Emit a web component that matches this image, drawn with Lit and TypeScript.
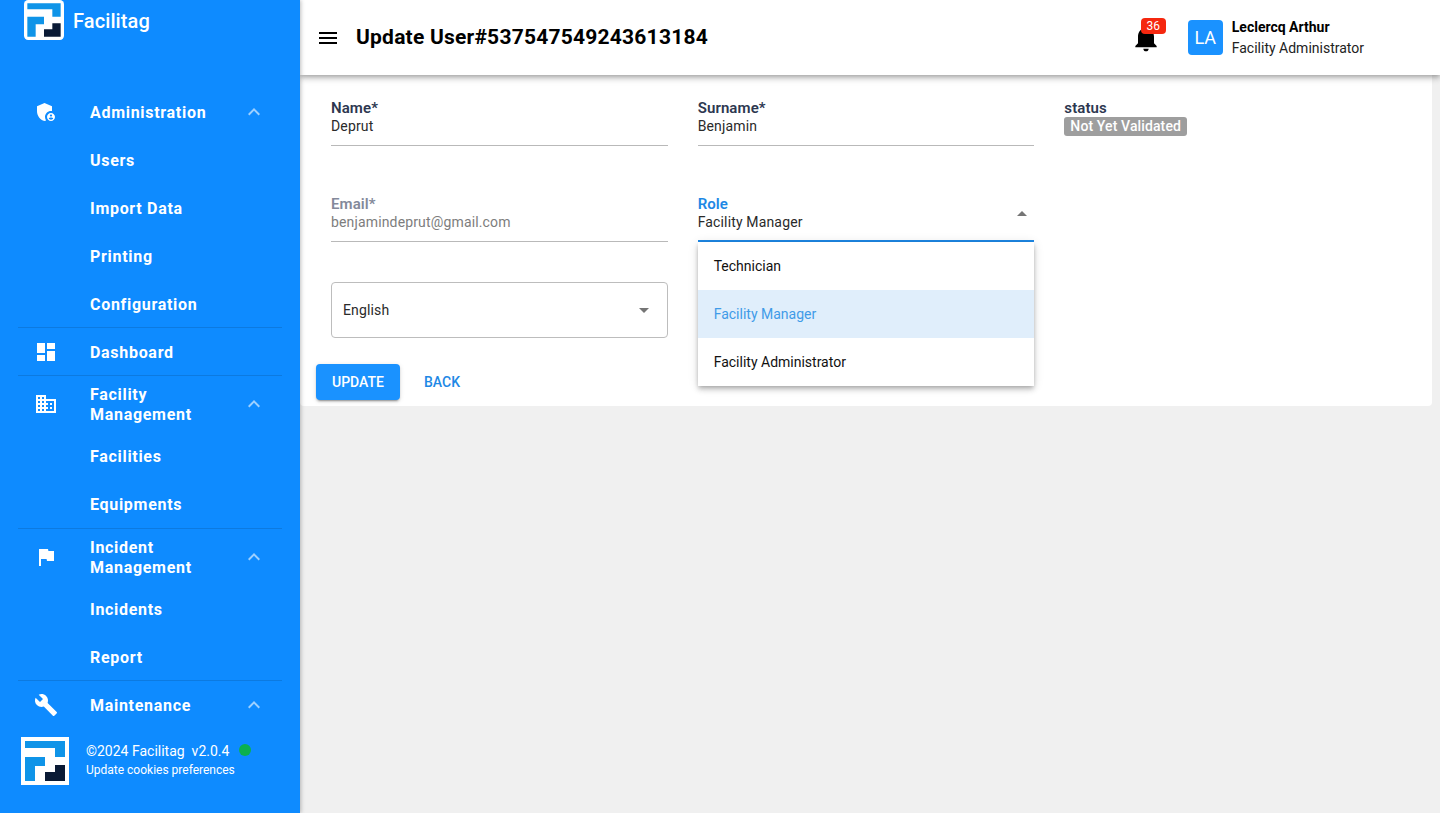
import { LitElement, html, css, svg } from "lit";
import { customElement } from "lit/decorators.js";

const P = {
  admin: [
    "M17 11c.34 0 .67.04 1 .09V6.27L10.5 3 3 6.27v4.91c0 4.54 3.2 8.79 7.5 9.82.55-.13 1.08-.32 1.6-.55-.69-.98-1.1-2.17-1.1-3.45 0-3.31 2.69-6 6-6z",
    "M17 13c-2.21 0-4 1.79-4 4s1.79 4 4 4 4-1.79 4-4-1.79-4-4-4zm0 1.38c.62 0 1.12.51 1.12 1.12s-.51 1.12-1.12 1.12-1.12-.51-1.12-1.12.5-1.12 1.12-1.12zm0 5.37c-.93 0-1.74-.46-2.24-1.17.05-.72 1.51-1.08 2.24-1.08s2.19.36 2.24 1.08c-.5.71-1.31 1.17-2.24 1.17z",
  ],
  dashboard: ["M3 13h8V3H3v10zm0 8h8v-6H3v6zm10 0h8V11h-8v10zm0-18v6h8V3h-8z"],
  domain: ["M12 7V3H2v18h20V7H12zM6 19H4v-2h2v2zm0-4H4v-2h2v2zm0-4H4V9h2v2zm0-4H4V5h2v2zm4 12H8v-2h2v2zm0-4H8v-2h2v2zm0-4H8V9h2v2zm0-4H8V5h2v2zm10 12h-8v-2h2v-2h-2v-2h2v-2h-2V9h8v10zm-2-8h-2v2h2v-2zm0 4h-2v2h2v-2z"],
  flag: ["M14.4 6L14 4H5v17h2v-7h5.6l.4 2h7V6z"],
  build: ["M22.7 19l-9.1-9.1c.9-2.3.4-5-1.5-6.9-2-2-5-2.4-7.4-1.3L9 6 6 9 1.6 4.7C.4 7.1.9 10.1 2.9 12.1c1.9 1.9 4.6 2.4 6.9 1.5l9.1 9.1c.4.4 1 .4 1.4 0l2.3-2.3c.5-.4.5-1.1.1-1.4z"],
  less: ["M12 8l-6 6 1.41 1.41L12 10.83l4.59 4.58L18 14z"],
  menu: ["M3 18h18v-2H3v2zm0-5h18v-2H3v2zm0-7v2h18V6H3z"],
  bell: ["M12 22c1.1 0 2-.9 2-2h-4c0 1.1.89 2 2 2zm6-6v-5c0-3.07-1.64-5.64-4.5-6.32V4c0-.83-.67-1.5-1.5-1.5s-1.5.67-1.5 1.5v.68C7.63 5.36 6 7.92 6 11v5l-2 2v1h16v-1l-2-2z"],
  down: ["M7 10l5 5 5-5z"],
  up: ["M7 14l5-5 5 5z"],
};

const icon = (paths: string[], cls = "") => html`<svg class="icon ${cls}" viewBox="0 0 24 24" fill="currentColor">${paths.map((d) => svg`<path d=${d}></path>`)}</svg>`;

const logo = (cls: string, rx: number) => html`<svg class=${cls} viewBox="0 0 48 48">
  <rect width="48" height="48" rx=${rx} fill="#fff"></rect>
  <path d="M4 4H44V20H34V11H4Z" fill="#0f94e8"></path>
  <path d="M4 20H24V29H14V44H4Z" fill="#0f94e8"></path>
  <path d="M24 44V35H34V28H44V44Z" fill="#0a1a35"></path>
</svg>`;

interface Group { icon: string[]; label: string[]; open?: boolean; subs?: string[]; tight?: boolean; noDivider?: boolean }

const GROUPS: Group[] = [
  { icon: P.admin, label: ["Administration"], open: true, subs: ["Users", "Import Data", "Printing", "Configuration"], tight: true },
  { icon: P.dashboard, label: ["Dashboard"], tight: true },
  { icon: P.domain, label: ["Facility", "Management"], open: true, subs: ["Facilities", "Equipments"] },
  { icon: P.flag, label: ["Incident", "Management"], open: true, subs: ["Incidents", "Report"], tight: true },
  { icon: P.build, label: ["Maintenance"], open: true, noDivider: true },
];

@customElement("app-root")
export class AppRoot extends LitElement {
  static styles = css`
    :host { display: block; height: 100vh; overflow: hidden; font-family: Roboto, "Liberation Sans", sans-serif; background: #f0f0f0; }
    * { box-sizing: border-box; }
    .icon { width: 24px; height: 24px; display: block; flex: none; }
    .app { display: flex; height: 100vh; }

    .side { width: 300px; flex: none; height: 100%; background: #0e8bff; color: #fff; display: flex; flex-direction: column; position: relative; z-index: 3; box-shadow: 1px 0 4px rgba(0,0,0,.25); }
    .brand { height: 88px; flex: none; padding-left: 24px; display: flex; align-items: flex-start; gap: 9px; }
    .brand-logo { width: 40px; height: 40px; display: block; }
    .brand-name { font-size: 20px; font-weight: 500; line-height: 42px; letter-spacing: .1px; }
    .nav { flex: 1; min-height: 0; overflow: hidden; padding: 0 18px; }
    .group { border-bottom: 1px solid rgba(0,0,0,.12); }
    .group.tight > :last-child { margin-bottom: -1px; }
    .group.plain { border-bottom: 0; }
    .row { min-height: 48px; display: flex; align-items: center; font-size: 16px; line-height: 20px; font-weight: 700; letter-spacing: .7px; }
    .row.two { min-height: 56px; }
    .row-icon { width: 72px; padding-left: 16px; flex: none; }
    .row-label { flex: 1; padding-top: 1px; }
    .chev { margin-right: 16px; color: rgba(255,255,255,.6); }
    .sub { height: 48px; display: flex; align-items: center; padding-left: 72px; font-size: 16px; font-weight: 700; letter-spacing: .7px; }
    .foot { height: 84px; flex: none; padding: 8px 0 0 21px; display: flex; align-items: flex-start; gap: 17px; }
    .foot-logo { width: 48px; height: 48px; display: block; flex: none; }
    .foot-text { padding-top: 5px; }
    .copy { display: flex; align-items: flex-start; font-size: 14px; line-height: 18px; white-space: pre; }
    .dot { width: 12px; height: 12px; border-radius: 50%; background: #0bb04f; margin: 2px 0 0 10px; }
    .cookies { font-size: 12px; line-height: 20px; }

    .main { flex: 1; min-width: 0; display: flex; flex-direction: column; }
    .top { height: 75px; flex: none; background: #fff; display: flex; align-items: center; padding: 0 76px 0 16px; position: relative; z-index: 2; box-shadow: 0 2px 4px -1px rgba(0,0,0,.2), 0 4px 5px 0 rgba(0,0,0,.14), 0 1px 10px 0 rgba(0,0,0,.12); }
    .burger { color: #000; margin-right: 16px; }
    h1 { margin: -1px 0 0; flex: 1; font-size: 21px; font-weight: 700; color: #000; letter-spacing: .22px; line-height: 24px; }
    .bell { position: relative; width: 32px; height: 32px; color: #000; margin: 0 26px 0 0; }
    .bell .icon { width: 32px; height: 32px; }
    .badge { position: absolute; left: 11px; top: -4px; width: 25px; height: 16px; border-radius: 4px; background: #f5270f; color: #fff; font-size: 12px; line-height: 16px; text-align: center; }
    .avatar { width: 35px; height: 35px; border-radius: 4px; background: #1a92ff; color: #fff; font-size: 18px; display: flex; align-items: center; justify-content: center; margin-right: 9px; }
    .who { color: #111; }
    .who-name { font-size: 14px; font-weight: 700; line-height: 20px; color: #000; }
    .who-role { font-size: 14px; line-height: 22px; color: #222; }

    .card { margin-right: 8px; height: 331px; background: #fff; padding: 23px 31px 0 16px; flex: none; border-radius: 0 0 4px 4px; }
    .grid { display: grid; grid-template-columns: repeat(3, 1fr); column-gap: 30px; padding-left: 15px; }
    .field { height: 96px; position: relative; }
    .field.short { height: 88px; }
    .field-box { height: 48px; border-bottom: 1px solid #b9b9b9; padding-top: 1px; position: relative; }
    .lab { font-size: 15px; font-weight: 600; line-height: 18px; color: #2d3750; letter-spacing: .1px; }
    .val { font-size: 14px; line-height: 20px; color: #2a2a2a; letter-spacing: .15px; margin-top: -1px; }
    .plain-box { padding-top: 1px; }
    .disabled .lab { color: #83899a; }
    .disabled .val { color: #7d7d7d; }
    .focus .field-box { border-bottom: 2px solid #1e88e5; }
    .focus .lab { color: #1e88e5; }
    .focus .icon { position: absolute; right: 0; top: 8px; color: #757575; }
    .status { display: block; width: fit-content; height: 19px; padding: 0 6px; border-radius: 3px; background: #9e9e9e; color: #fff; font-size: 14px; font-weight: 500; line-height: 19px; letter-spacing: .12px; }
    .menu { position: absolute; left: 0; right: 0; top: 48px; background: #fff; z-index: 4; box-shadow: 0 2px 4px -1px rgba(0,0,0,.2), 0 4px 5px 0 rgba(0,0,0,.14), 0 1px 10px 0 rgba(0,0,0,.12); }
    .opt { height: 48px; display: flex; align-items: center; padding-left: 16px; font-size: 14px; color: #111; }
    .opt.on { background: #e0eefb; color: #3f9be8; }
    .outlined { height: 56px; border: 1px solid #bdbdbd; border-radius: 4px; display: flex; align-items: center; justify-content: space-between; padding: 0 11px; font-size: 14px; color: #2a2a2a; letter-spacing: .15px; }
    .outlined .icon { color: #757575; }
    .actions { display: flex; align-items: center; gap: 24px; margin-top: -14px; }
    button { font: inherit; border: 0; background: none; padding: 0; font-size: 14px; font-weight: 500; text-transform: uppercase; }
    .primary { width: 84px; height: 36px; background: #1a92ff; color: #fff; border-radius: 4px; box-shadow: 0 3px 1px -2px rgba(0,0,0,.2), 0 2px 2px 0 rgba(0,0,0,.14), 0 1px 5px 0 rgba(0,0,0,.12); }
    .ghost { color: #1e88e5; }
  `;

  private group(g: Group) {
    const cls = g.noDivider ? "group plain" : g.tight ? "group tight" : "group";
    return html`<div class=${cls}>
      <div class="row ${g.label.length > 1 ? "two" : ""}">
        <div class="row-icon">${icon(g.icon)}</div>
        <div class="row-label">${g.label.map((l) => html`<div>${l}</div>`)}</div>
        ${g.open ? icon(P.less, "chev") : ""}
      </div>
      ${(g.subs ?? []).map((s) => html`<div class="sub">${s}</div>`)}
    </div>`;
  }

  render() {
    return html`<div class="app">
      <aside class="side">
        <div class="brand">${logo("brand-logo", 5)}<div class="brand-name">Facilitag</div></div>
        <nav class="nav">${GROUPS.map((g) => this.group(g))}</nav>
        <div class="foot">
          ${logo("foot-logo", 0)}
          <div class="foot-text">
            <div class="copy">©2024 Facilitag  v2.0.4<span class="dot"></span></div>
            <div class="cookies">Update cookies preferences</div>
          </div>
        </div>
      </aside>
      <div class="main">
        <header class="top">
          ${icon(P.menu, "burger")}
          <h1>Update User#537547549243613184</h1>
          <div class="bell">${icon(P.bell)}<span class="badge">36</span></div>
          <div class="avatar">LA</div>
          <div class="who"><div class="who-name">Leclercq Arthur</div><div class="who-role">Facility Administrator</div></div>
        </header>
        <section class="card">
          <div class="grid">
            <div class="field"><div class="field-box"><div class="lab">Name*</div><div class="val">Deprut</div></div></div>
            <div class="field"><div class="field-box"><div class="lab">Surname*</div><div class="val">Benjamin</div></div></div>
            <div class="field"><div class="plain-box"><div class="lab">status</div><span class="status">Not Yet Validated</span></div></div>
            <div class="field short disabled"><div class="field-box"><div class="lab">Email*</div><div class="val">benjamindeprut@gmail.com</div></div></div>
            <div class="field short focus">
              <div class="field-box"><div class="lab">Role</div><div class="val">Facility Manager</div>${icon(P.up)}</div>
              <div class="menu">
                <div class="opt">Technician</div>
                <div class="opt on">Facility Manager</div>
                <div class="opt">Facility Administrator</div>
              </div>
            </div>
            <div></div>
            <div class="field"><div class="outlined">English${icon(P.down)}</div></div>
          </div>
          <div class="actions"><button class="primary">Update</button><button class="ghost">Back</button></div>
        </section>
      </div>
    </div>`;
  }
}
